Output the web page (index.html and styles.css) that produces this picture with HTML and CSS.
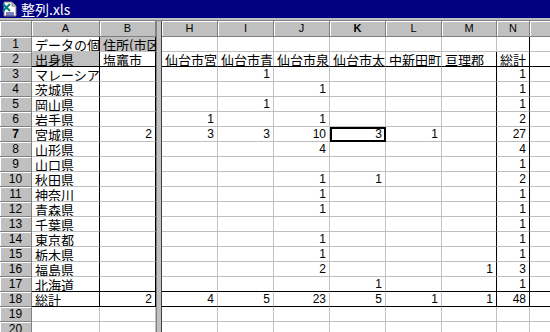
FILE: index.html
```html
<!DOCTYPE html>
<html lang="ja">
<head>
<meta charset="utf-8">
<title>整列.xls</title>
<link rel="stylesheet" href="styles.css">
</head>
<body>
<div class="window">
  <div class="titlebar">
    <svg class="icon" width="16" height="16" viewBox="0 0 16 16">
      <path d="M2 1h8l4 4v10H2z" fill="#fff" stroke="#808080" stroke-width="1"/>
      <path d="M10 1v4h4" fill="#c0c0c0" stroke="#808080" stroke-width="1"/>
      <path d="M1 3l7 7M8 3l-7 7" stroke="#008080" stroke-width="2"/>
      <path d="M4 12h8M4 14h8" stroke="#000080" stroke-width="1"/>
    </svg>
    <span class="title">整列.xls</span>
  </div>
  <div class="frame"></div>
  <table class="sheet">
    <colgroup>
      <col class="c-rh"><col class="c-a"><col class="c-b"><col class="c-split">
      <col class="c-std"><col class="c-std"><col class="c-std"><col class="c-std"><col class="c-std">
      <col class="c-m"><col class="c-n"><col class="c-o">
    </colgroup>
    <thead>
      <tr>
        <th class="corner"></th><th>A</th><th>B</th><th class="split"></th>
        <th>H</th><th>I</th><th>J</th><th class="active">K</th><th>L</th><th>M</th><th>N</th><th></th>
      </tr>
    </thead>
    <tbody>
      <tr><th>1</th><td class="a">データの個数</td><td class="b btn">住所(市区町村)</td><td class="split"></td><td></td><td></td><td></td><td></td><td></td><td></td><td class="n"></td><td></td></tr>
      <tr class="line"><th>2</th><td class="a btn">出身県</td><td class="b">塩竈市</td><td class="split"></td><td>仙台市宮城野区</td><td>仙台市青葉区</td><td>仙台市泉区</td><td>仙台市太白区</td><td>中新田町</td><td class="m">亘理郡</td><td class="n">総計</td><td></td></tr>
      <tr><th>3</th><td class="a">マレーシア</td><td class="b"></td><td class="split"></td><td></td><td class="num">1</td><td></td><td></td><td></td><td class="m"></td><td class="n num">1</td><td></td></tr>
      <tr><th>4</th><td class="a">茨城県</td><td class="b"></td><td class="split"></td><td></td><td></td><td class="num">1</td><td></td><td></td><td class="m"></td><td class="n num">1</td><td></td></tr>
      <tr><th>5</th><td class="a">岡山県</td><td class="b"></td><td class="split"></td><td></td><td class="num">1</td><td></td><td></td><td></td><td class="m"></td><td class="n num">1</td><td></td></tr>
      <tr><th>6</th><td class="a">岩手県</td><td class="b"></td><td class="split"></td><td class="num">1</td><td></td><td class="num">1</td><td></td><td></td><td class="m"></td><td class="n num">2</td><td></td></tr>
      <tr><th class="active">7</th><td class="a">宮城県</td><td class="b num">2</td><td class="split"></td><td class="num">3</td><td class="num">3</td><td class="num">10</td><td class="num cur">3</td><td class="num">1</td><td class="m"></td><td class="n num">27</td><td></td></tr>
      <tr><th>8</th><td class="a">山形県</td><td class="b"></td><td class="split"></td><td></td><td></td><td class="num">4</td><td></td><td></td><td class="m"></td><td class="n num">4</td><td></td></tr>
      <tr><th>9</th><td class="a">山口県</td><td class="b"></td><td class="split"></td><td></td><td></td><td></td><td></td><td></td><td class="m"></td><td class="n num">1</td><td></td></tr>
      <tr><th>10</th><td class="a">秋田県</td><td class="b"></td><td class="split"></td><td></td><td></td><td class="num">1</td><td class="num">1</td><td></td><td class="m"></td><td class="n num">2</td><td></td></tr>
      <tr><th>11</th><td class="a">神奈川</td><td class="b"></td><td class="split"></td><td></td><td></td><td class="num">1</td><td></td><td></td><td class="m"></td><td class="n num">1</td><td></td></tr>
      <tr><th>12</th><td class="a">青森県</td><td class="b"></td><td class="split"></td><td></td><td></td><td class="num">1</td><td></td><td></td><td class="m"></td><td class="n num">1</td><td></td></tr>
      <tr><th>13</th><td class="a">千葉県</td><td class="b"></td><td class="split"></td><td></td><td></td><td></td><td></td><td></td><td class="m"></td><td class="n num">1</td><td></td></tr>
      <tr><th>14</th><td class="a">東京都</td><td class="b"></td><td class="split"></td><td></td><td></td><td class="num">1</td><td></td><td></td><td class="m"></td><td class="n num">1</td><td></td></tr>
      <tr><th>15</th><td class="a">栃木県</td><td class="b"></td><td class="split"></td><td></td><td></td><td class="num">1</td><td></td><td></td><td class="m"></td><td class="n num">1</td><td></td></tr>
      <tr><th>16</th><td class="a">福島県</td><td class="b"></td><td class="split"></td><td></td><td></td><td class="num">2</td><td></td><td></td><td class="m num">1</td><td class="n num">3</td><td></td></tr>
      <tr class="line"><th>17</th><td class="a">北海道</td><td class="b"></td><td class="split"></td><td></td><td></td><td></td><td class="num">1</td><td></td><td class="m"></td><td class="n num">1</td><td></td></tr>
      <tr class="line"><th>18</th><td class="a">総計</td><td class="b num">2</td><td class="split"></td><td class="num">4</td><td class="num">5</td><td class="num">23</td><td class="num">5</td><td class="num">1</td><td class="m num">1</td><td class="n num">48</td><td></td></tr>
      <tr><th>19</th><td></td><td></td><td class="split"></td><td></td><td></td><td></td><td></td><td></td><td></td><td></td><td></td></tr>
      <tr><th>20</th><td></td><td></td><td class="split"></td><td></td><td></td><td></td><td></td><td></td><td></td><td></td><td></td></tr>
    </tbody>
  </table>
</div>
</body>
</html>
```

FILE: styles.css
```css
html, body {
  margin: 0;
  padding: 0;
}
body {
  width: 550px;
  height: 332px;
  overflow: hidden;
  background: #c0c0c0;
  font-family: "Noto Sans CJK JP", sans-serif;
}
.window {
  width: 550px;
  height: 332px;
  overflow: hidden;
}
.titlebar {
  height: 18px;
  background: #000080;
  color: #fff;
  display: flex;
  align-items: center;
  gap: 3px;
  padding-left: 2px;
}
.title {
  font-size: 14px;
  line-height: 18px;
}
.frame {
  height: 2px;
  background: #c0c0c0;
  border-bottom: 1px solid #808080;
}
.sheet {
  border-collapse: separate;
  border-spacing: 0;
  table-layout: fixed;
  width: 560px;
  background: #fff;
}
.c-rh { width: 32px; }
.c-a { width: 68px; }
.c-b { width: 56px; }
.c-split { width: 6px; }
.c-std { width: 56px; }
.c-m { width: 55px; }
.c-n { width: 33px; }
.c-o { width: 30px; }

.sheet th,
.sheet td {
  box-sizing: border-box;
  padding: 0;
  white-space: nowrap;
  overflow: hidden;
}
.sheet th {
  height: 16px;
  background: #c0c0c0;
  border-right: 1px solid #808080;
  border-bottom: 1px solid #808080;
  box-shadow: inset 1px 1px 0 #fff;
  font-family: "Liberation Sans", sans-serif;
  font-size: 11px;
  font-weight: normal;
  text-align: center;
  line-height: 15px;
  color: #000;
}
.sheet tbody th {
  height: 15px;
  line-height: 14px;
  font-size: 12px;
}
.sheet th.active {
  font-weight: bold;
}
.sheet td {
  height: 15px;
  border-right: 1px solid #c0c0c0;
  border-bottom: 1px solid #c0c0c0;
  font-size: 13px;
  line-height: 13px;
  padding: 1px 2px 0 3px;
  vertical-align: bottom;
  color: #000;
}
.sheet td.num {
  text-align: right;
  padding-right: 3px;
  font-family: "Liberation Sans", sans-serif;
  font-size: 12px;
}
.sheet .split {
  background: #c0c0c0;
  border-left: 1px solid #808080;
  border-right: 1px solid #404040;
  border-bottom: none;
  box-shadow: none;
  padding: 0;
}
.sheet td.a,
.sheet td.b,
.sheet td.m,
.sheet td.n {
  border-right-color: #000;
}
.sheet tr.line td:not(.split) {
  border-bottom-color: #000;
}
.sheet td.btn {
  background: #c0c0c0;
}
.sheet td.cur {
  outline: 2px solid #000;
  outline-offset: -2px;
}
```
